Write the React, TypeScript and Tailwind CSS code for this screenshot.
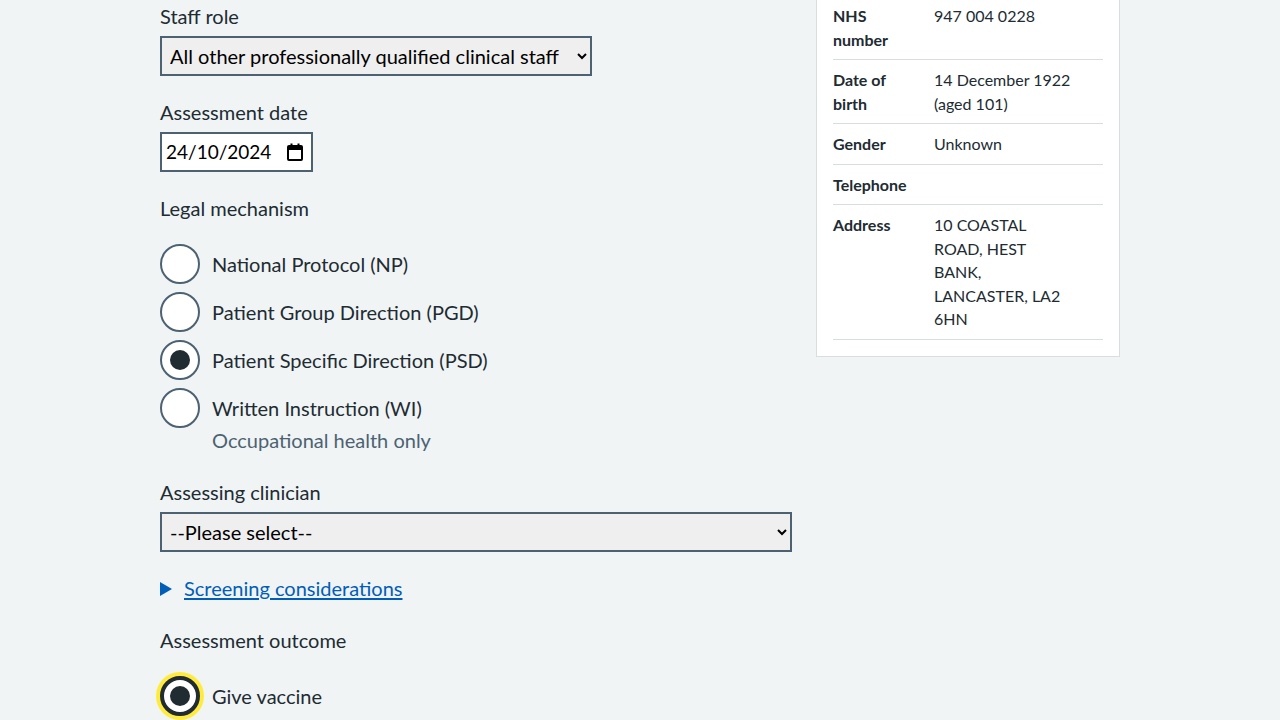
import React from 'react';

const Radio: React.FC<{ label: string; checked?: boolean; focused?: boolean }> = ({ label, checked, focused }) => (
    <div className="flex h-10 items-center gap-3">
        <span
            className={
                focused
                    ? 'flex h-10 w-10 shrink-0 items-center justify-center rounded-full border-4 border-[#212b32] bg-white shadow-[0_0_0_4px_#ffeb3b]'
                    : 'flex h-10 w-10 shrink-0 items-center justify-center rounded-full border-2 border-[#4c6272] bg-white'
            }
        >
            {checked && <span className="h-5 w-5 rounded-full bg-[#212b32]" />}
        </span>
        <span className="text-[20px] leading-7">{label}</span>
    </div>
);

const SummaryRow: React.FC<{ k: string; children?: React.ReactNode }> = ({ k, children }) => (
    <div className="flex border-b border-[#d8dde0] py-2 text-[16px] leading-[23.5px]">
        <dt className="w-[101px] shrink-0 pr-6 font-bold">{k}</dt>
        <dd className="w-[142px]">{children}</dd>
    </div>
);

export default function App() {
    return (
        <div className="min-h-screen overflow-hidden bg-[#f0f4f5] font-['Lato','Liberation_Sans',sans-serif] text-[#212b32]">
            <div className="mx-auto flex w-[960px] items-start gap-6">
                {/* form column */}
                <div className="w-[632px] pt-[2px]">
                    <div className="mb-[22px]">
                        <label className="mb-1.5 block text-[20px] leading-7">Staff role</label>
                        <select className="h-10 w-[432px] border-2 border-[#4c6272] bg-[#efefef] pl-1 pr-1 text-[20px] text-black">
                            <option>All other professionally qualified clinical staff</option>
                        </select>
                    </div>

                    <div className="mb-[22px]">
                        <label className="mb-1.5 block text-[20px] leading-7">Assessment date</label>
                        <div className="flex h-10 w-[153px] items-center justify-between border-2 border-[#4c6272] bg-white pl-1 pr-2 text-[19px] text-black">
                            <span>24/10/2024</span>
                            <svg width="16" height="18" viewBox="0 0 16 18" fill="none">
                                <rect x="1" y="3" width="14" height="14" rx="1" stroke="#000" strokeWidth="2" />
                                <rect x="1" y="3" width="14" height="4" fill="#000" />
                                <rect x="3.5" y="0.5" width="2" height="4" fill="#000" />
                                <rect x="10.5" y="0.5" width="2" height="4" fill="#000" />
                            </svg>
                        </div>
                    </div>

                    <fieldset className="mb-6">
                        <legend className="block text-[20px] leading-7">Legal mechanism</legend>
                        <div className="mt-[22px] flex flex-col gap-2">
                            <Radio label="National Protocol (NP)" />
                            <Radio label="Patient Group Direction (PGD)" />
                            <Radio label="Patient Specific Direction (PSD)" checked />
                            <div>
                                <Radio label="Written Instruction (WI)" />
                                <p className="-mt-[2px] pl-[52px] text-[20px] leading-7 text-[#4c6272]">Occupational health only</p>
                            </div>
                        </div>
                    </fieldset>

                    <div className="mb-[22px]">
                        <label className="mb-1.5 block text-[20px] leading-7">Assessing clinician</label>
                        <select className="h-10 w-full border-2 border-[#4c6272] bg-[#efefef] pl-1 pr-1 text-[20px] text-black">
                            <option>--Please select--</option>
                        </select>
                    </div>

                    <div className="mb-6 flex items-center gap-3 text-[20px] leading-7">
                        <svg width="12" height="14" viewBox="0 0 12 14" className="mt-[2px]">
                            <path d="M0 0 L12 7 L0 14 Z" fill="#005eb8" />
                        </svg>
                        <a href="#" className="text-[#005eb8] underline underline-offset-2">Screening considerations</a>
                    </div>

                    <fieldset>
                        <legend className="block text-[20px] leading-7">Assessment outcome</legend>
                        <div className="mt-[22px]">
                            <Radio label="Give vaccine" checked focused />
                        </div>
                    </fieldset>
                </div>

                {/* patient details card */}
                <div className="-mt-[21px] w-[304px] border border-[#d8dde0] bg-white px-4 pb-4 pt-4">
                    <dl>
                        <SummaryRow k="NHS number">947 004 0228</SummaryRow>
                        <SummaryRow k="Date of birth">14 December 1922 (aged 101)</SummaryRow>
                        <SummaryRow k="Gender">Unknown</SummaryRow>
                        <SummaryRow k="Telephone" />
                        <SummaryRow k="Address">10 COASTAL ROAD, HEST BANK, LANCASTER, LA2 6HN</SummaryRow>
                    </dl>
                </div>
            </div>
        </div>
    );
}
